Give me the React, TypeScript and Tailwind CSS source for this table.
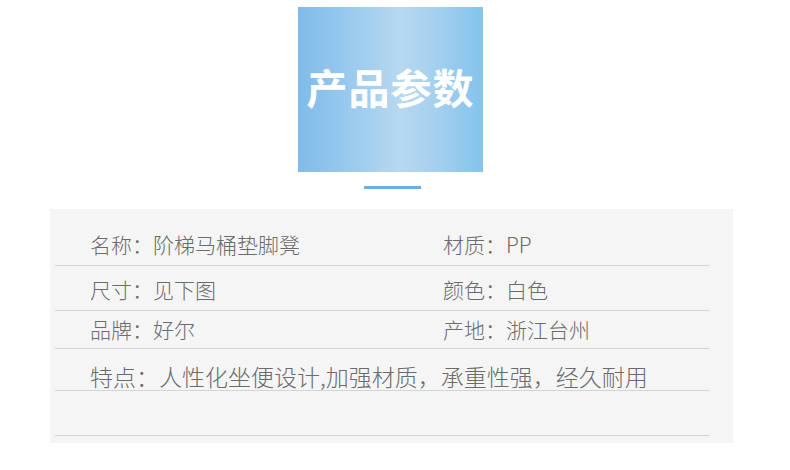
const font = "font-['Microsoft_YaHei','Noto_Sans_CJK_SC',sans-serif]";

type Row = { left: string; right?: string; h: string; pt: string; big?: boolean };

const rows: Row[] = [
  { left: "名称：阶梯马桶垫脚凳", right: "材质：PP", h: "h-[57px]", pt: "pt-[23px]" },
  { left: "尺寸：见下图", right: "颜色：白色", h: "h-[45px]", pt: "pt-[11px]" },
  { left: "品牌：好尔", right: "产地：浙江台州", h: "h-[38px]", pt: "pt-[6px]" },
  { left: "特点：人性化坐便设计,加强材质，承重性强，经久耐用", h: "h-[42px]", pt: "pt-[14px]", big: true },
  { left: "", h: "h-[45px]", pt: "pt-0" },
];

export default function App() {
  return (
    <div className={`w-[790px] h-[470px] bg-white overflow-hidden ${font}`}>
      <div className="pt-[7px] pl-[298px]">
        <div className="w-[185px] h-[165px] flex items-center justify-center bg-[linear-gradient(90deg,#7fbbe9_0%,#9ccbee_30%,#b7d8ef_55%,#a4d0ee_75%,#83c3ec_100%)]">
          <span className="text-white text-[41px] font-bold tracking-[1px] leading-none pb-[6px]">产品参数</span>
        </div>
      </div>
      <div className="mt-[14px] ml-[364px] w-[57px] h-[3px] bg-[#6cb0e2]" />
      <div className="mt-[20px] ml-[50px] w-[683px] h-[234px] bg-[#f5f5f5] pl-[5px]">
        <div className="w-[655px]">
          {rows.map((r, i) => (
            <div key={i} className={`${r.h} ${r.pt} border-b border-[#d4d4d4] flex pl-[35px] text-[#6b6b6b] font-light`}>
              <div className={`${r.big ? "text-[23px] leading-[26px]" : "w-[353px] text-[21px] leading-[24px]"} whitespace-nowrap`}>
                {r.left}
              </div>
              {r.right && <div className="text-[21px] leading-[24px] whitespace-nowrap">{r.right}</div>}
            </div>
          ))}
        </div>
      </div>
    </div>
  );
}
